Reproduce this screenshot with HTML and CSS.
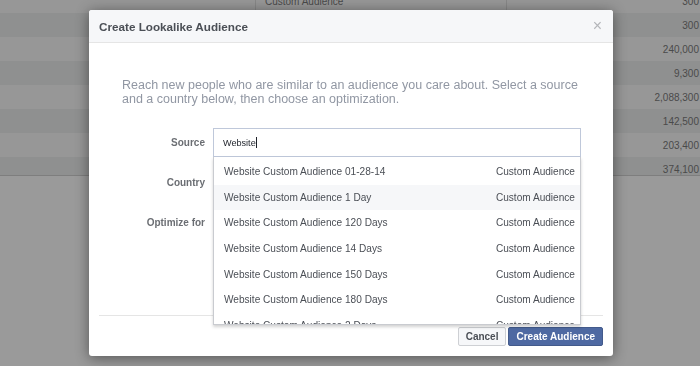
FILE: index.html
```html
<!DOCTYPE html>
<html lang="en">
<head>
    <meta charset="UTF-8">
    <title>Create Lookalike Audience</title>
    <link rel="stylesheet" href="styles.css">
</head>
<body>
    <div class="tabla">
        <div class="fila clara"><span class="col-nombre"></span><span class="col-tipo">Custom Audience</span><span class="col-valor">300</span></div>
        <div class="fila oscura"><span class="col-nombre"></span><span class="col-tipo"></span><span class="col-valor">300</span></div>
        <div class="fila clara"><span class="col-nombre"></span><span class="col-tipo"></span><span class="col-valor">240,000</span></div>
        <div class="fila oscura"><span class="col-nombre"></span><span class="col-tipo"></span><span class="col-valor">9,300</span></div>
        <div class="fila clara"><span class="col-nombre"></span><span class="col-tipo"></span><span class="col-valor">2,088,300</span></div>
        <div class="fila oscura"><span class="col-nombre"></span><span class="col-tipo"></span><span class="col-valor">142,500</span></div>
        <div class="fila clara"><span class="col-nombre"></span><span class="col-tipo"></span><span class="col-valor">203,400</span></div>
        <div class="fila oscura"><span class="col-nombre"></span><span class="col-tipo"></span><span class="col-valor">374,100</span></div>
    </div>

    <div class="dialogo">
        <div class="dialogo-cabecera">
            <span class="titulo">Create Lookalike Audience</span>
            <span class="cerrar">&times;</span>
        </div>
        <div class="dialogo-cuerpo">
            <p class="intro">Reach new people who are similar to an audience you care about. Select a source and a country below, then choose an optimization.</p>
            <div class="formulario">
                <div class="campo">
                    <label class="etiqueta">Source</label>
                    <div class="control">
                        <div class="entrada">Website<span class="cursor"></span></div>
                        <ul class="lista">
                            <li class="opcion"><span>Website Custom Audience 01-28-14</span><span class="tipo">Custom Audience</span></li>
                            <li class="opcion activa"><span>Website Custom Audience 1 Day</span><span class="tipo">Custom Audience</span></li>
                            <li class="opcion"><span>Website Custom Audience 120 Days</span><span class="tipo">Custom Audience</span></li>
                            <li class="opcion"><span>Website Custom Audience 14 Days</span><span class="tipo">Custom Audience</span></li>
                            <li class="opcion"><span>Website Custom Audience 150 Days</span><span class="tipo">Custom Audience</span></li>
                            <li class="opcion"><span>Website Custom Audience 180 Days</span><span class="tipo">Custom Audience</span></li>
                            <li class="opcion"><span>Website Custom Audience 2 Days</span><span class="tipo">Custom Audience</span></li>
                        </ul>
                    </div>
                </div>
                <div class="campo">
                    <label class="etiqueta">Country</label>
                    <div class="control"></div>
                </div>
                <div class="campo">
                    <label class="etiqueta">Optimize for</label>
                    <div class="control"></div>
                </div>
            </div>
        </div>
        <div class="dialogo-pie">
            <button class="boton">Cancel</button>
            <button class="boton primario">Create Audience</button>
        </div>
    </div>
</body>
</html>
```

FILE: styles.css
```css
body {
    margin: 0;
    height: 366px;
    overflow: hidden;
    background: #9a9a9a;
    font-family: 'Liberation Sans', Arial, sans-serif;
}

/* tabla de fondo, oscurecida */
.tabla {
    margin-top: -11px;
    height: 186px;
    overflow: hidden;
    border-bottom: 1px solid #7e7e7e;
}

.fila {
    display: flex;
    height: 24px;
    align-items: center;
    font-size: 10px;
    color: #4a4a4a;
}

.fila.clara {
    background: #979797;
}

.fila.oscura {
    background: #8f9090;
}

.col-nombre {
    width: 255px;
    height: 100%;
    border-right: 1px solid #878787;
}

.col-tipo {
    width: 241px;
    height: 100%;
    padding-left: 9px;
    display: flex;
    align-items: center;
    border-right: 1px solid #878787;
}

.col-valor {
    flex: 1;
    text-align: right;
    padding-right: 1px;
}

/* dialogo */
.dialogo {
    position: fixed;
    top: 10px;
    left: 89px;
    width: 524px;
    height: 346px;
    background: #fff;
    border-radius: 3px;
    box-shadow: 0 2px 14px rgba(0,0,0,0.45);
    display: flex;
    flex-direction: column;
}

.dialogo-cabecera {
    height: 32px;
    background: #f6f7f9;
    border-bottom: 1px solid #e5e5e5;
    border-radius: 3px 3px 0 0;
    display: flex;
    align-items: center;
    justify-content: space-between;
    padding: 0 10px;
}

.titulo {
    font-size: 11.7px;
    font-weight: bold;
    color: #4b4f56;
}

.cerrar {
    font-size: 16px;
    color: #b4b6ba;
    margin-right: 1px;
}

.dialogo-cuerpo {
    height: 272px;
    padding: 0 32px 0 33px;
}

.intro {
    margin: 36px 0 0;
    width: 462px;
    font-size: 12.5px;
    line-height: 13.5px;
    color: #9197a3;
}

.formulario {
    margin-top: 22px;
    display: flex;
    flex-direction: column;
    gap: 10px;
}

.campo {
    display: flex;
    height: 30px;
    gap: 8px;
}

.etiqueta {
    width: 83px;
    text-align: right;
    font-size: 10px;
    font-weight: bold;
    color: #6b6e73;
    line-height: 30px;
}

.control {
    position: relative;
    width: 368px;
}

.entrada {
    height: 27px;
    border: 1px solid #bfc8da;
    font-size: 9.1px;
    color: #1d2129;
    padding-left: 9px;
    display: flex;
    align-items: center;
}

.cursor {
    width: 1px;
    height: 11px;
    background: #1d2129;
}

.lista {
    position: absolute;
    top: 29px;
    left: 0;
    right: 0;
    height: 165px;
    margin: 0;
    padding: 2px 0 0;
    list-style: none;
    background: #fff;
    border: 1px solid #c9cbd0;
    border-top: none;
    box-shadow: 0 2px 3px rgba(0,0,0,0.18);
    overflow: hidden;
    z-index: 2;
}

.opcion {
    height: 25.6px;
    display: flex;
    align-items: center;
    justify-content: space-between;
    padding: 0 5px 0 10px;
    font-size: 10.1px;
    color: #4b4f56;
}

.opcion.activa {
    background: #f6f7f9;
}

.dialogo-pie {
    margin: 0 10px;
    border-top: 1px solid #e5e5e5;
    padding-top: 11px;
    display: flex;
    justify-content: flex-end;
    gap: 2px;
}

.boton {
    height: 19px;
    padding: 0 7px;
    font-family: 'Liberation Sans', Arial, sans-serif;
    font-size: 10px;
    font-weight: bold;
    color: #4b4f56;
    background: #f6f7f9;
    border: 1px solid #ced0d4;
    border-radius: 2px;
}

.boton.primario {
    color: #fff;
    background: #4e69a2;
    border-color: #435a8b;
}
```
